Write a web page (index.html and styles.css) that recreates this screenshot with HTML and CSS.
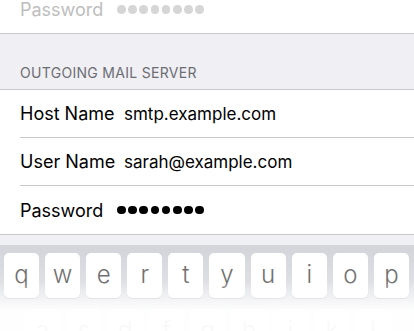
FILE: index.html
```html
<!DOCTYPE html>
<html lang="en">
<head>
  <meta charset="UTF-8" />
  <meta name="viewport" content="width=device-width, initial-scale=1.0" />
  <title>Mail Account Settings</title>
  <link rel="stylesheet" href="styles.css">
</head>
<body>
  <div class="screen">
    <div class="cell faded">
      <span class="label">Password</span>
      <span class="dots"><i></i><i></i><i></i><i></i><i></i><i></i><i></i><i></i></span>
    </div>

    <div class="section-header">OUTGOING MAIL SERVER</div>

    <div class="group">
      <div class="cell">
        <span class="label">Host Name</span>
        <span class="value">smtp.example.com</span>
      </div>
      <div class="cell">
        <span class="label">User Name</span>
        <span class="value">sarah@example.com</span>
      </div>
      <div class="cell">
        <span class="label">Password</span>
        <span class="dots"><i></i><i></i><i></i><i></i><i></i><i></i><i></i><i></i></span>
      </div>
    </div>

    <div class="group-footer"></div>

    <div class="keyboard">
      <div class="key-row">
        <span class="key">q</span><span class="key">w</span><span class="key">e</span><span class="key">r</span><span class="key">t</span>
        <span class="key">y</span><span class="key">u</span><span class="key">i</span><span class="key">o</span><span class="key">p</span>
      </div>
      <div class="key-row second">
        <span class="key">a</span><span class="key">s</span><span class="key">d</span><span class="key">f</span><span class="key">g</span>
        <span class="key">h</span><span class="key">j</span><span class="key">k</span><span class="key">l</span>
      </div>
    </div>
  </div>
</body>
</html>
```

FILE: styles.css
```css
:root {
  --group-bg: #efeff4;
  --line-color: #c8c7cc;
  --header-color: #6d6d72;
  --ui-font: Inter, 'Noto Sans', 'Liberation Sans', sans-serif;
}
body {
  margin: 0;
  background: white;
  font-family: var(--ui-font);
}
.screen {
  position: relative;
  width: 414px;
  height: 331px;
  overflow: hidden;
  background: white;
}
/* white fade over the bottom of the keyboard */
.screen::after {
  content: '';
  position: absolute;
  left: 0;
  right: 0;
  bottom: 0;
  height: 50px;
  background: linear-gradient(rgba(255, 255, 255, 0), rgba(255, 255, 255, 0.95) 60%);
}
.cell {
  display: flex;
  align-items: center;
  height: 48px;
  box-sizing: border-box;
  margin-left: 20px;
  border-bottom: 1px solid var(--line-color);
  font-size: 18px;
  color: #000;
}
.cell:last-child {
  border-bottom: none;
}
.label {
  width: 104px;
  flex-shrink: 0;
}
.value {
  font-size: 17px;
}
.dots {
  display: flex;
  gap: 2.6px;
  margin-left: -7px;
}
.dots i {
  width: 8.6px;
  height: 8.6px;
  border-radius: 50%;
  background: #000;
}
.faded {
  margin-top: -14px;
  margin-left: 0;
  padding-left: 20px;
  color: #bdbdbd;
}
.faded .dots i {
  background: #d6d6d6;
}
.section-header {
  height: 55px;
  box-sizing: border-box;
  padding: 0 20px 8px;
  display: flex;
  align-items: flex-end;
  background: var(--group-bg);
  color: var(--header-color);
  font-size: 14px;
  letter-spacing: 0.3px;
}
.group {
  border-top: 1px solid var(--line-color);
  border-bottom: 1px solid var(--line-color);
  background: white;
}
.group-footer {
  height: 10px;
  background: var(--group-bg);
}
.keyboard {
  height: 100px;
  padding: 8px 5px 0 4px;
  box-sizing: border-box;
  background: linear-gradient(#d2d4da, #e4e5e9 55%, #f4f4f6);
}
.key-row {
  display: grid;
  grid-template-columns: repeat(10, 1fr);
  gap: 6px;
}
.key-row.second {
  grid-template-columns: repeat(9, 35.3px);
  padding-left: 21px;
  margin-top: 11px;
}
.key {
  height: 45px;
  display: flex;
  align-items: center;
  justify-content: center;
  padding-bottom: 3px;
  box-sizing: border-box;
  background: white;
  border-radius: 5px;
  box-shadow: 0 1px 0 #c4c5c9;
  font-size: 24px;
  font-weight: 300;
  color: #707070;
}
```
